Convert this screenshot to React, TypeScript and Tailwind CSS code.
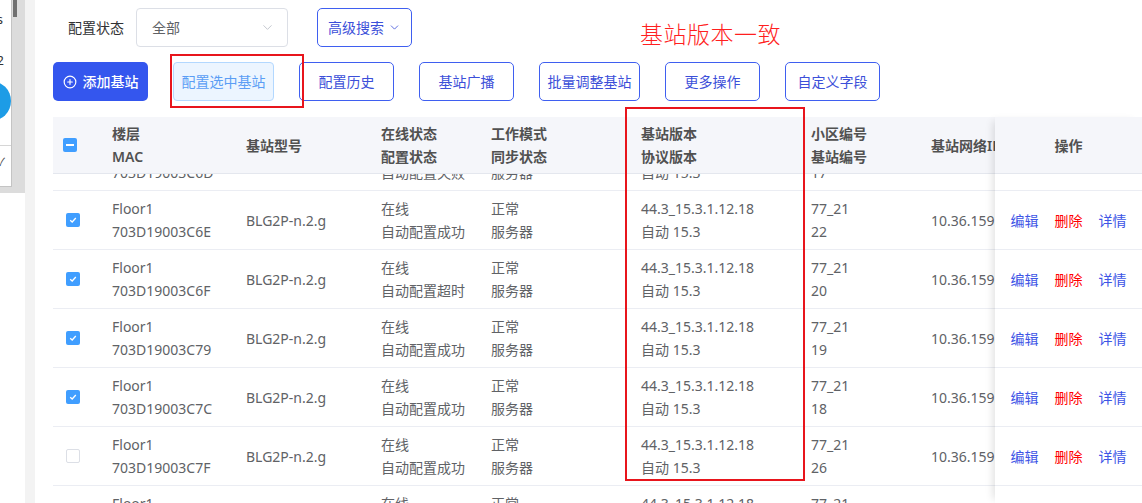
import React from "react";
import { ChevronDown, CirclePlus } from "lucide-react";

type Row = { mac: string; cfg: string; no: string; checked: boolean };

const rows: Row[] = [
  { mac: "703D19003C6D", cfg: "自动配置失败", no: "17", checked: true },
  { mac: "703D19003C6E", cfg: "自动配置成功", no: "22", checked: true },
  { mac: "703D19003C6F", cfg: "自动配置超时", no: "20", checked: true },
  { mac: "703D19003C79", cfg: "自动配置成功", no: "19", checked: true },
  { mac: "703D19003C7C", cfg: "自动配置成功", no: "18", checked: true },
  { mac: "703D19003C7F", cfg: "自动配置成功", no: "26", checked: false },
  { mac: "703D19003C80", cfg: "自动配置成功", no: "21", checked: false },
];

function CheckBox({ checked }: { checked: boolean }) {
  if (checked) {
    return (
      <div className="w-[14px] h-[14px] rounded-[2px] bg-[#409eff] flex items-center justify-center">
        <svg width="10" height="10" viewBox="0 0 10 10">
          <polyline points="2.2,5.2 4.2,7 7.8,3" fill="none" stroke="white" strokeWidth="1.3" />
        </svg>
      </div>
    );
  }
  return <div className="w-[14px] h-[14px] rounded-[2px] border border-[#dcdfe6] bg-white" />;
}

const outlineBtn =
  "h-[39px] shrink-0 rounded-[5px] border border-[#3f5ff0] text-[#3c4fd9] text-[14px] flex items-center justify-center bg-white";

export default function App() {
  return (
    <div className="relative w-[1142px] h-[503px] overflow-hidden bg-white flex font-['Noto_Sans','Noto_Sans_CJK_SC',sans-serif]">
      {/* clipped foreign window fragment */}
      <div className="w-[25px] shrink-0 flex flex-col">
        <div className="h-[193px] bg-[#dcdcdc] flex">
          <div className="w-[12px] h-[187px] bg-white border-r border-b border-[#c4c4c4] overflow-hidden flex flex-col">
            <div className="mt-[12px] w-[60px] -ml-[57px] text-right text-[13px] leading-[14px] text-[#333]">Is</div>
            <div className="mt-[27px] w-[60px] -ml-[56px] text-right text-[13px] leading-[14px] text-[#333]">12</div>
            <div className="mt-[14px] w-[40px] h-[40px] -ml-[29px] rounded-full bg-[#1d9ce6] shrink-0" />
            <div className="mt-[24px] border-t border-[#d6d6d6] w-full" />
            <div className="mt-[10px] w-[20px] -ml-[15px] text-right text-[11px] leading-[12px] text-[#444]">✓</div>
          </div>
          <div className="w-[13px] pl-[1px]">
            <div className="w-[4px] h-[17px] bg-[#707070]" />
          </div>
        </div>
      </div>
      <div className="w-[10px] shrink-0 bg-[#f3f3f3]" />

      {/* main */}
      <div className="flex-1 min-w-0 flex flex-col pl-[18px]">
        {/* filter row */}
        <div className="mt-[8px] h-[39px] flex items-center shrink-0">
          <span className="ml-[15px] text-[14px] text-[#303133]">配置状态</span>
          <div className="ml-[12px] w-[152px] h-[39px] rounded-[4px] border border-[#dcdfe6] flex items-center justify-between pl-[15px] pr-[12px]">
            <span className="text-[14px] text-[#606266]">全部</span>
            <ChevronDown size={15} color="#c0c4cc" strokeWidth={1.5} />
          </div>
          <div className={outlineBtn + " ml-[29px] w-[95px] gap-[4px]"}>
            <span>高级搜索</span>
            <ChevronDown size={13} color="#3c4fd9" strokeWidth={1.5} />
          </div>
        </div>

        {/* button row */}
        <div className="mt-[15px] h-[39px] flex gap-[25px] shrink-0">
          <div className="h-[39px] w-[95px] rounded-[5px] bg-[#3456ee] text-white text-[14px] flex items-center justify-center gap-[6px]">
            <CirclePlus size={14} strokeWidth={2} />
            <span className="font-medium">添加基站</span>
          </div>
          <div className="h-[39px] w-[101px] rounded-[4px] border border-[#b3d8ff] bg-[#ecf5ff] text-[#5b9ef5] text-[14px] flex items-center justify-center">
            配置选中基站
          </div>
          <div className={outlineBtn + " w-[95px]"}>配置历史</div>
          <div className={outlineBtn + " w-[95px]"}>基站广播</div>
          <div className={outlineBtn + " w-[101px]"}>批量调整基站</div>
          <div className={outlineBtn + " w-[95px]"}>更多操作</div>
          <div className={outlineBtn + " w-[95px]"}>自定义字段</div>
        </div>

        {/* table */}
        <div className="mt-[16px] flex-1 min-h-0 flex text-[14px]">
          {/* scrolling part */}
          <div className="w-[942px] shrink-0 overflow-hidden flex flex-col">
            <div className="w-[1046px] h-[57px] shrink-0 bg-[#f5f6fa] border-b border-[#e4e7ee] grid grid-cols-[47px_134px_135px_110px_150px_170px_120px_180px] items-center text-[#515151] font-semibold leading-[23px]">
              <div className="pl-[10px]">
                <div className="w-[14px] h-[14px] rounded-[2px] bg-[#409eff] flex items-center justify-center">
                  <div className="w-[8px] h-[2px] bg-white" />
                </div>
              </div>
              <div className="pl-[12px]">
                <div>楼层</div>
                <div>MAC</div>
              </div>
              <div className="pl-[12px]">基站型号</div>
              <div className="pl-[12px]">
                <div>在线状态</div>
                <div>配置状态</div>
              </div>
              <div className="pl-[12px]">
                <div>工作模式</div>
                <div>同步状态</div>
              </div>
              <div className="pl-[12px]">
                <div>基站版本</div>
                <div>协议版本</div>
              </div>
              <div className="pl-[12px]">
                <div>小区编号</div>
                <div>基站编号</div>
              </div>
              <div className="pl-[12px] whitespace-nowrap">基站网络IP</div>
            </div>
            <div className="flex-1 min-h-0 overflow-hidden">
              <div className="-mt-[42px]">
                {rows.map((r) => (
                  <div
                    key={r.mac}
                    className="w-[1046px] h-[59px] border-b border-[#ebedf3] grid grid-cols-[47px_134px_135px_110px_150px_170px_120px_180px] items-center text-[#606266] leading-[23px]"
                  >
                    <div className="pl-[13px]">
                      <CheckBox checked={r.checked} />
                    </div>
                    <div className="pl-[12px]">
                      <div>Floor1</div>
                      <div>{r.mac}</div>
                    </div>
                    <div className="pl-[12px]">BLG2P-n.2.g</div>
                    <div className="pl-[12px]">
                      <div>在线</div>
                      <div>{r.cfg}</div>
                    </div>
                    <div className="pl-[12px]">
                      <div>正常</div>
                      <div>服务器</div>
                    </div>
                    <div className="pl-[12px]">
                      <div>44.3_15.3.1.12.18</div>
                      <div>自动 15.3</div>
                    </div>
                    <div className="pl-[12px]">
                      <div>77_21</div>
                      <div>{r.no}</div>
                    </div>
                    <div className="pl-[12px] whitespace-nowrap">10.36.159.101</div>
                  </div>
                ))}
              </div>
            </div>
          </div>

          {/* fixed operations column */}
          <div className="w-[147px] shrink-0 relative z-10 bg-white flex flex-col shadow-[-6px_0_8px_-4px_rgba(0,0,0,0.12)]">
            <div className="h-[57px] shrink-0 bg-[#f5f6fa] border-b border-[#e4e7ee] flex items-center justify-center text-[#515151] font-semibold">
              操作
            </div>
            <div className="flex-1 min-h-0 overflow-hidden">
              <div className="-mt-[42px]">
                {rows.map((r) => (
                  <div key={r.mac} className="h-[59px] border-b border-[#ebedf3] flex items-center justify-center gap-[16px]">
                    <span className="text-[#3d55e6]">编辑</span>
                    <span className="text-[#ff0000]">删除</span>
                    <span className="text-[#3d55e6]">详情</span>
                  </div>
                ))}
              </div>
            </div>
          </div>
        </div>
      </div>

      {/* annotations */}
      <div className="absolute left-[640px] top-[18px] text-[23px] leading-[30px] tracking-[0.5px] text-[#ff1f1f] font-light font-['Noto_Sans_CJK_SC',serif]">
        基站版本一致
      </div>
      <div className="absolute left-[170px] top-[54px] w-[134px] h-[54px] border-2 border-[#e8151c]" />
      <div className="absolute left-[625px] top-[107px] w-[180px] h-[374px] border-2 border-[#e8151c]" />
    </div>
  );
}
